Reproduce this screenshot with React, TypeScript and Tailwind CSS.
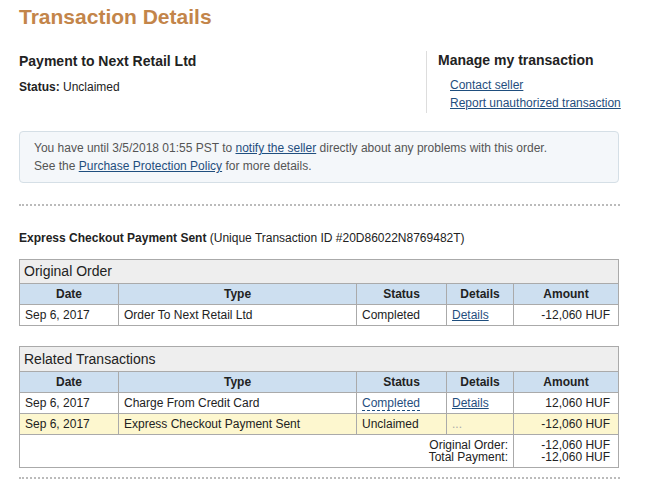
function Cols() {
  return (
    <colgroup>
      <col className="w-[99px]" />
      <col className="w-[238px]" />
      <col className="w-[90px]" />
      <col className="w-[67px]" />
      <col className="w-[105px]" />
    </colgroup>
  );
}

function ColHead() {
  return (
    <tr className="h-[21px] bg-[#cddff0] text-[12px] font-bold text-[#222]">
      <th className="border border-[#aaa] font-bold">Date</th>
      <th className="border border-[#aaa] font-bold">Type</th>
      <th className="border border-[#aaa] font-bold">Status</th>
      <th className="border border-[#aaa] font-bold">Details</th>
      <th className="border border-[#aaa] font-bold">Amount</th>
    </tr>
  );
}

const cell = "whitespace-nowrap border border-[#aaa] px-[5px] text-[12px] text-[#222]";

export default function App() {
  return (
    <div className="min-h-screen bg-white font-['Liberation_Sans',Arial,sans-serif] text-[#333]">
      <div className="w-[640px] pl-[19px] pt-[4px]">
        <h1 className="text-[21px] font-bold leading-[26px] text-[#c3854a]">Transaction Details</h1>

        {/* top */}
        <div className="mt-[22px] flex">
          <div className="w-[407px] shrink-0">
            <h2 className="text-[14px] font-bold leading-[18px] text-[#222]">Payment to Next Retail Ltd</h2>
            <p className="mt-[8px] text-[12px] leading-[18px] text-[#222]">
              <span className="font-bold">Status:</span> Unclaimed
            </p>
          </div>
          <div className="-mt-[1px] h-[62px] shrink-0 whitespace-nowrap border-l border-[#ddd] pl-[11px]">
            <h2 className="text-[14px] font-bold leading-[18px] text-[#222]">Manage my transaction</h2>
            <div className="mt-[7px] flex flex-col pl-[12px] text-[12px] leading-[18px]">
              <a className="text-[#1f4e7e] underline">Contact seller</a>
              <a className="text-[#1f4e7e] underline">Report unauthorized transaction</a>
            </div>
          </div>
        </div>

        {/* notice */}
        <div className="mt-[18px] w-[600px] rounded-[4px] border border-[#d5dfe6] bg-[#f4f7fa] px-[14px] py-[7px] text-[12px] leading-[18px] text-[#555]">
          <p>
            You have until 3/5/2018 01:55 PST to <a className="text-[#1f4e7e] underline">notify the seller</a> directly about any problems with this order.
          </p>
          <p>
            See the <a className="text-[#1f4e7e] underline">Purchase Protection Policy</a> for more details.
          </p>
        </div>

        <div className="mt-[21px] w-[601px] border-t-2 border-dotted border-[#bbb]" />

        <p className="mt-[23px] text-[12px] leading-[18px] text-[#222]">
          <span className="font-bold">Express Checkout Payment Sent</span> (Unique Transaction ID #20D86022N8769482T)
        </p>

        {/* original order */}
        <table className="mt-[12px] w-[599px] table-fixed border-collapse">
          <Cols />
          <tbody>
            <tr className="h-[24px] bg-[#eeeeee]">
              <td colSpan={5} className="border border-[#aaa] px-[4px] text-[14px] text-[#222]">
                Original Order
              </td>
            </tr>
            <ColHead />
            <tr className="h-[21px] bg-white">
              <td className={cell}>Sep 6, 2017</td>
              <td className={cell}>Order To Next Retail Ltd</td>
              <td className={cell}>Completed</td>
              <td className={cell}>
                <a className="text-[#1f4e7e] underline">Details</a>
              </td>
              <td className={`${cell} pr-[8px] text-right`}>-12,060 HUF</td>
            </tr>
          </tbody>
        </table>

        {/* related */}
        <table className="mt-[20px] w-[599px] table-fixed border-collapse">
          <Cols />
          <tbody>
            <tr className="h-[25px] bg-[#eeeeee]">
              <td colSpan={5} className="border border-[#aaa] px-[4px] text-[14px] text-[#222]">
                Related Transactions
              </td>
            </tr>
            <ColHead />
            <tr className="h-[21px] bg-white">
              <td className={cell}>Sep 6, 2017</td>
              <td className={cell}>Charge From Credit Card</td>
              <td className={cell}>
                <span className="border-b border-dashed border-[#1f4e7e] text-[#1f4e7e]">Completed</span>
              </td>
              <td className={cell}>
                <a className="text-[#1f4e7e] underline">Details</a>
              </td>
              <td className={`${cell} pr-[8px] text-right`}>12,060 HUF</td>
            </tr>
            <tr className="h-[21px] bg-[#fdf7cf]">
              <td className={cell}>Sep 6, 2017</td>
              <td className={cell}>Express Checkout Payment Sent</td>
              <td className={cell}>Unclaimed</td>
              <td className={`${cell} text-[#aaa]`}>...</td>
              <td className={`${cell} pr-[8px] text-right`}>-12,060 HUF</td>
            </tr>
            <tr className="h-[33px] bg-white">
              <td colSpan={4} className="border border-[#aaa] px-[5px] text-right text-[12px] leading-[12.5px] text-[#222]">
                <div>Original Order:</div>
                <div>Total Payment:</div>
              </td>
              <td className="whitespace-nowrap border border-[#aaa] pr-[8px] text-right text-[12px] leading-[12.5px] text-[#222]">
                <div>-12,060 HUF</div>
                <div>-12,060 HUF</div>
              </td>
            </tr>
          </tbody>
        </table>

        <div className="mt-[9px] w-[601px] border-t-2 border-dotted border-[#bbb]" />
      </div>
    </div>
  );
}
